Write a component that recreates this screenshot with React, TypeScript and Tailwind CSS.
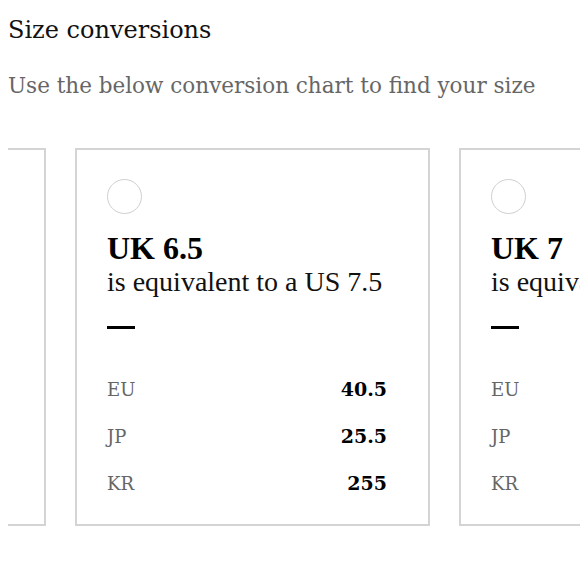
import React from "react";

interface SizeRow {
  label: string;
  value: string;
}

interface SizeCard {
  uk: string;
  us: string;
  rows: SizeRow[];
}

const cards: SizeCard[] = [
  {
    uk: "UK 6",
    us: "7",
    rows: [
      { label: "EU", value: "40" },
      { label: "JP", value: "25" },
      { label: "KR", value: "250" },
    ],
  },
  {
    uk: "UK 6.5",
    us: "7.5",
    rows: [
      { label: "EU", value: "40.5" },
      { label: "JP", value: "25.5" },
      { label: "KR", value: "255" },
    ],
  },
  {
    uk: "UK 7",
    us: "8",
    rows: [
      { label: "EU", value: "41" },
      { label: "JP", value: "26" },
      { label: "KR", value: "260" },
    ],
  },
];

const georgia = "font-[family-name:'DejaVu_Serif',Georgia,serif]";
const times = "font-[family-name:'Liberation_Serif','Times_New_Roman',serif]";

const Card = ({ card }: { card: SizeCard }) => (
  <div className="shrink-0 w-[355px] h-[378px] border-2 border-[#d4d4d4] bg-white pl-[30px] pt-[29px]">
    <div className="w-[280px]">
      <div className="w-[35px] h-[35px] rounded-full border-[1.5px] border-[#cfcfcf]" />
      <h3 className={`${times} mt-[16px] text-[32px] leading-[36px] font-bold text-black`}>
        {card.uk}
      </h3>
      <p className={`${times} text-[28px] leading-[32px] text-[#111] whitespace-nowrap`}>
        is equivalent to a US {card.us}
      </p>
      <div className="mt-[28px] w-[28px] h-[3px] bg-black" />
      <div className="mt-[49px] flex flex-col gap-[24px]">
        {card.rows.map((row) => (
          <div key={row.label} className="flex items-center justify-between h-[23px]">
            <span className={`${georgia} text-[18px] text-[#666]`}>{row.label}</span>
            <span className={`${georgia} text-[19px] font-bold text-black`}>{row.value}</span>
          </div>
        ))}
      </div>
    </div>
  </div>
);

export default function App() {
  return (
    <div className="w-[580px] h-[580px] bg-white overflow-hidden">
      <div className="px-2 pt-[14px]">
        <h1 className={`${georgia} text-[24px] leading-[32px] text-[#111]`}>Size conversions</h1>
        <p className={`${georgia} mt-[25px] text-[21.5px] leading-[30px] text-[#666]`}>
          Use the below conversion chart to find your size
        </p>
      </div>
      <div className="mt-[47px] ml-2 overflow-hidden">
        <div className="flex gap-[29px] ml-[-317px]">
          {cards.map((card) => (
            <Card key={card.uk} card={card} />
          ))}
        </div>
      </div>
    </div>
  );
}
